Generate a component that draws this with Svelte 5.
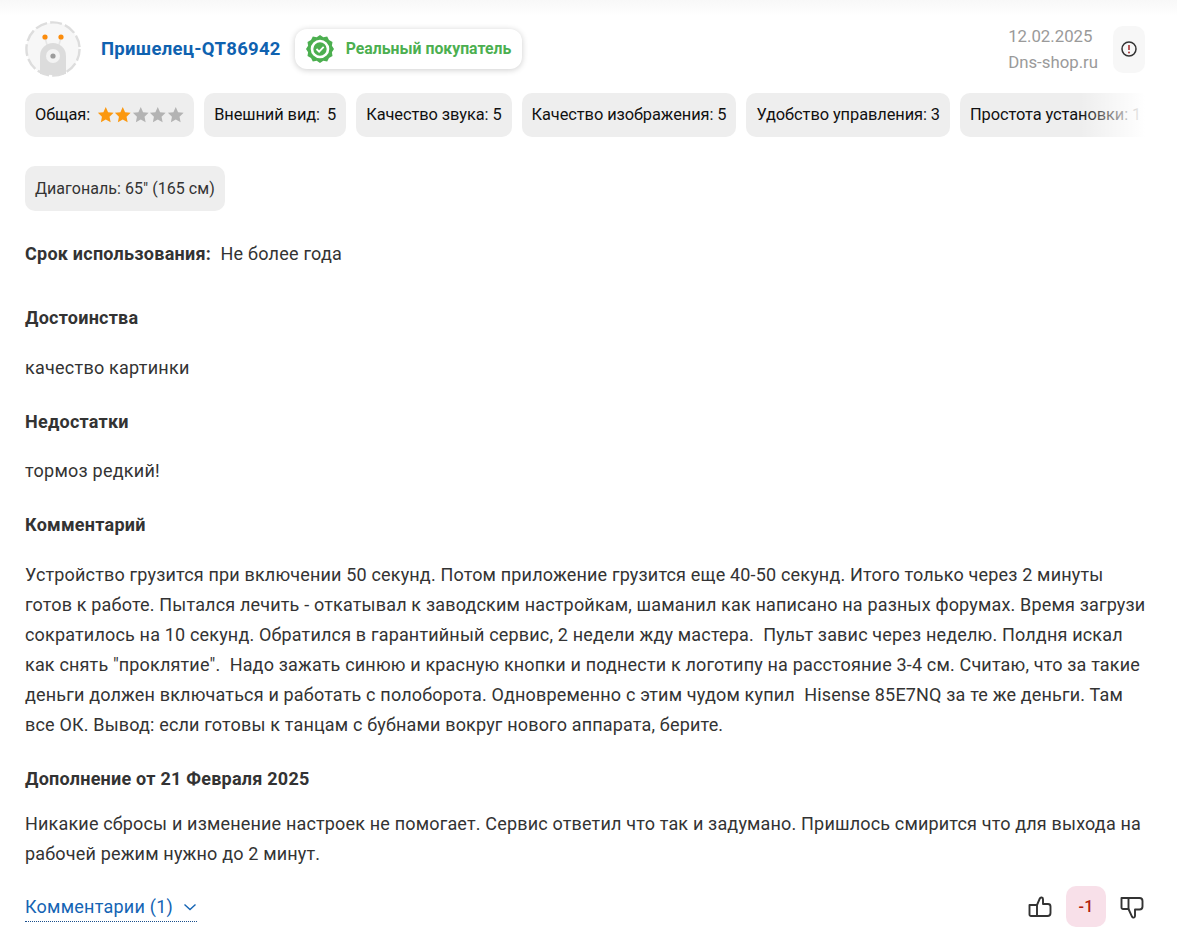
<script>
	const chips = [
		{ label: 'Внешний вид', value: 5 },
		{ label: 'Качество звука', value: 5 },
		{ label: 'Качество изображения', value: 5 },
		{ label: 'Удобство управления', value: 3 },
		{ label: 'Простота установки', value: 1 }
	];
	const stars = [true, true, false, false, false];
</script>

<div class="review">
	<header class="head">
		<div class="avatar">
			<svg width="56" height="56" viewBox="0 0 56 56">
				<circle cx="28" cy="28" r="26.6" fill="#f7f7f7" stroke="#ddd" stroke-width="2.4" stroke-dasharray="12 3.2" />
				<path d="M20 17l3 10M36 17l-3 10" stroke="#e6e6e6" stroke-width="1.6" />
				<circle cx="20" cy="16" r="2.6" fill="#fb8c0c" />
				<circle cx="36" cy="16" r="2.6" fill="#fb8c0c" />
				<path d="M15 53V35a13 13 0 0 1 26 0v18q-13 2-26 0z" fill="#dcdcdc" />
				<circle cx="28" cy="35" r="7" fill="#f3f3f3" />
				<circle cx="28" cy="35" r="2.6" fill="#9c9c9c" />
			</svg>
		</div>
		<a class="name" href="#u">Пришелец-QT86942</a>
		<div class="badge">
			<svg width="30" height="30" viewBox="0 0 30 30">
				<path d="M15 1l3.300 2.200 3.900-.6 1.800 3.500 3.500 1.800-.6 3.900L29 15l-2.100 3.200.6 3.900-3.500 1.800-1.800 3.500-3.900-.6L15 29l-3.300-2.200-3.900.6L6 23.900l-3.500-1.800.6-3.900L1 15l2.100-3.200-.6-3.900L6 6.100l1.800-3.500 3.900.6z" fill="#4caf50" />
				<circle cx="15" cy="15" r="8" fill="none" stroke="#fff" stroke-width="2.6" />
				<path d="M11.500 15l2.600 2.600 4.600-4.800" fill="none" stroke="#fff" stroke-width="1.8" />
			</svg>
			<span>Реальный покупатель</span>
		</div>
		<div class="meta">
			<div>12.02.2025</div>
			<div>Dns-shop.ru</div>
		</div>
		<button class="report" aria-label="Пожаловаться">
			<svg width="18" height="18" viewBox="0 0 18 18">
				<circle cx="9" cy="9" r="7" fill="none" stroke="#333" stroke-width="1.5" />
				<path d="M9 5v5" stroke="#a33" stroke-width="1.6" />
				<circle cx="9" cy="12.4" r="1" fill="#a33" />
			</svg>
		</button>
	</header>

	<div class="chips">
		<div class="chip">
			<span>Общая:</span>
			<span class="stars">
				{#each stars as on}
					<svg width="17.5" height="17.5" viewBox="0 0 24 24"><path d="M12 1.500l3.200 7 7.600.9-5.600 5.200 1.500 7.600L12 18.400 5.300 22.200l1.500-7.600L1.200 9.400l7.600-.9z" fill={on ? '#fb980f' : '#b3b3b3'} /></svg>
				{/each}
			</span>
		</div>
		{#each chips as c}
			<div class="chip">
				<span>{c.label}:</span>
				<span>{c.value}</span>
			</div>
		{/each}
		<div class="fade"></div>
	</div>

	<div class="chip soft">Диагональ: 65" (165 см)</div>

	<p class="usage"><b>Срок использования:</b>&nbsp; Не более года</p>

	<h4 class="first">Достоинства</h4>
	<p>качество картинки</p>
	<h4>Недостатки</h4>
	<p>тормоз редкий!</p>
	<h4>Комментарий</h4>
	<p class="long">Устройство грузится при включении 50 секунд. Потом приложение грузится еще 40-50 секунд. Итого только через 2 минуты<br />готов к работе. Пытался лечить - откатывал к заводским настройкам, шаманил как написано на разных форумах. Время загрузи<br />сократилось на 10 секунд. Обратился в гарантийный сервис, 2 недели жду мастера.&nbsp; Пульт завис через неделю. Полдня искал<br />как снять "проклятие".&nbsp; Надо зажать синюю и красную кнопки и поднести к логотипу на расстояние 3-4 см. Считаю, что за такие<br />деньги должен включаться и работать с полоборота. Одновременно с этим чудом купил&nbsp; Hisense 85E7NQ за те же деньги. Там<br />все ОК. Вывод: если готовы к танцам с бубнами вокруг нового аппарата, берите.</p>
	<h4>Дополнение от 21 Февраля 2025</h4>
	<p class="long extra">Никакие сбросы и изменение настроек не помогает. Сервис ответил что так и задумано. Пришлось смирится что для выхода на<br />рабочей режим нужно до 2 минут.</p>

	<footer class="foot">
		<a class="comments" href="#c">
			Комментарии (1)
			<svg width="14" height="8" viewBox="0 0 14 8"><path d="M1.500 1.500L7 6.500l5.500-5" fill="none" stroke="#1464b4" stroke-width="1.4" /></svg>
		</a>
		<div class="votes">
			<svg width="24" height="24" viewBox="0 0 24 24" fill="none" stroke="#333" stroke-width="1.9" stroke-linejoin="round">
				<path d="M1.500 10h7.500v11H3a1.500 1.500 0 0 1-1.500-1.500z" />
				<path d="M9 10l2.800-6.500c.7-1.600 3.200-1.200 3.200.7V9h5a2.500 2.500 0 0 1 2.500 2.500V18a3 3 0 0 1-3 3H9" />
			</svg>
			<span class="score">-1</span>
			<svg width="24" height="24" viewBox="0 0 24 24" fill="none" stroke="#333" stroke-width="1.9" stroke-linejoin="round">
				<path d="M1.500 3h7v11H3a1.500 1.500 0 0 1-1.500-1.500z" />
				<path d="M8.500 3h11a3 3 0 0 1 3 3v5.500a3 3 0 0 1-3 3h-4.500v6.500c0 1.700-2.100 2.200-2.900.8L8.500 14" />
			</svg>
		</div>
	</footer>
</div>

<style>
	:global(body) {
		margin: 0;
		background: #fff;
		color: #333;
		font-family: 'Roboto', 'Liberation Sans', sans-serif;
		font-size: 18px;
		letter-spacing: 0.24px;
		line-height: 30px;
	}
	.review {
		box-sizing: border-box;
		width: 1177px;
		height: 951px;
		padding: 20px 32px 0 25px;
		background: linear-gradient(#f8f8f8, #fff 16px);
	}
	.head {
		display: flex;
		align-items: center;
		height: 58px;
	}
	.avatar {
		display: flex;
		width: 56px;
		height: 56px;
		margin-right: 20px;
	}
	.name {
		color: #0f62b0;
		font-weight: 700;
		font-size: 18.5px;
		letter-spacing: 0.28px;
		text-decoration: none;
	}
	.badge {
		display: flex;
		align-items: center;
		gap: 11px;
		height: 40px;
		margin-left: 14px;
		padding: 0 11px 0 10px;
		border-radius: 12px;
		background: #fff;
		box-shadow: 0 1px 6px rgba(0, 0, 0, 0.2);
		color: #4caf50;
		font-weight: 700;
		font-size: 15.8px;
		letter-spacing: 0;
	}
	.meta {
		margin-left: auto;
		color: #9a9a9a;
		font-size: 16.8px;
		letter-spacing: 0;
		line-height: 26px;
	}
	.report {
		display: flex;
		align-items: center;
		justify-content: center;
		width: 32px;
		height: 47px;
		margin-left: 15px;
		padding: 0;
		border: 0;
		border-radius: 10px;
		background: #f7f7f7;
	}
	.chips {
		position: relative;
		display: flex;
		gap: 10px;
		margin-top: 15px;
		overflow: hidden;
	}
	.chip {
		flex: none;
		display: flex;
		align-items: center;
		justify-content: space-between;
		gap: 4px;
		box-sizing: border-box;
		height: 44px;
		padding: 0 10px;
		border-radius: 10px;
		background: #eee;
		color: #111;
		font-size: 16.4px;
		letter-spacing: -0.08px;
		white-space: nowrap;
	}
	.chip:nth-child(2) {
		min-width: 142px;
	}
	.stars {
		display: flex;
		margin-left: 2.5px;
	}
	.fade {
		position: absolute;
		top: 0;
		right: 0;
		width: 65px;
		height: 44px;
		background: linear-gradient(90deg, rgba(255, 255, 255, 0), #fff);
	}
	.soft {
		width: fit-content;
		height: 45px;
		margin-top: 29px;
		color: #333;
		font-size: 16px;
		letter-spacing: 0.05px;
	}
	p {
		margin: 0;
	}
	.long {
		letter-spacing: 0.17px;
		white-space: nowrap;
	}
	.usage {
		margin-top: 28px;
	}
	b,
	h4 {
		font-weight: 700;
	}
	h4 {
		margin: 23.75px 0 19.75px;
		font-size: 18px;
		line-height: 30px;
		color: #333;
	}
	h4.first {
		margin-top: 34px;
	}
	.extra {
		margin-top: -4px;
	}
	.foot {
		display: flex;
		align-items: center;
		justify-content: space-between;
		margin-top: 17px;
	}
	.comments {
		display: flex;
		align-items: center;
		gap: 10px;
		padding-top: 2px;
		border-bottom: 1px dotted #1a4f8c;
		color: #1464b4;
		line-height: 28px;
		text-decoration: none;
	}
	.votes {
		display: flex;
		align-items: center;
		gap: 14px;
		margin-right: 1px;
	}
	.score {
		display: flex;
		align-items: center;
		justify-content: center;
		width: 40px;
		height: 41px;
		border-radius: 10px;
		background: #f8e0e9;
		color: #b0200c;
		font-size: 16px;
		font-weight: 500;
	}
</style>
